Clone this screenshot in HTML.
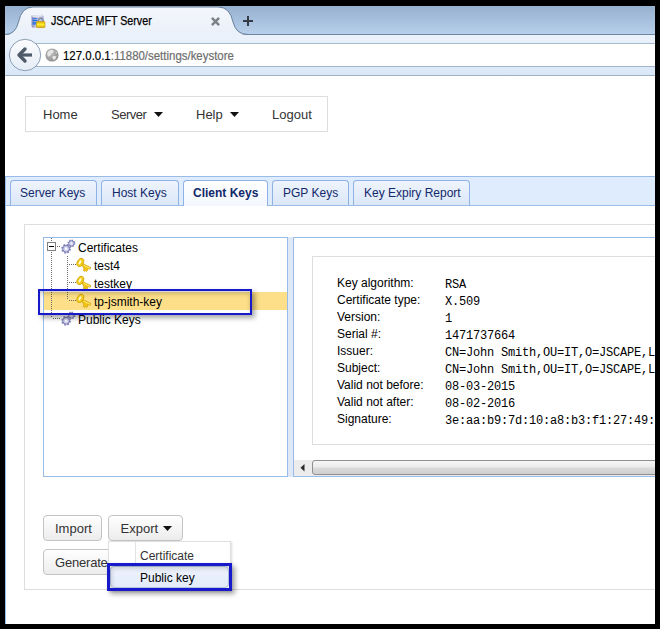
<!DOCTYPE html>
<html><head><meta charset="utf-8">
<style>
*{margin:0;padding:0;box-sizing:border-box}
html,body{width:660px;height:629px;overflow:hidden;background:#000}
body{position:relative;font-family:"Liberation Sans",sans-serif}
.a{position:absolute}
#vp{position:absolute;left:5px;top:6px;width:650px;height:618px;background:#fff;overflow:hidden}
/* chrome */
#strip{position:absolute;left:0;top:0;width:650px;height:29px;background:linear-gradient(#96b0cf,#b7cfea);border-bottom:1px solid #6f87a2}
#toolbar{position:absolute;left:0;top:29px;width:650px;height:41px;background:linear-gradient(#ebf2fb,#d9e7f7);border-bottom:1px solid #9fb1c4}
#url{position:absolute;left:20px;top:37px;width:640px;height:24px;background:#fff;border-top:1px solid #a9bacd;border-bottom:1px solid #a3b4c6}
.t{white-space:pre;position:absolute;line-height:1}
.nav{font-size:13px;color:#333}
.tab{position:absolute;top:180px;height:25px;border:1px solid #8db2e3;border-bottom:none;border-radius:4px 4px 0 0;background:linear-gradient(#eef4fd,#dbe7f7);font-size:12px;color:#12296a}
.lbl{font-size:12px;color:#000}
.val{font-family:"Liberation Mono",monospace;font-size:12px;color:#000;letter-spacing:-0.2px}
.btn{position:absolute;height:26px;border:1px solid #c4c4c4;border-radius:4px;background:linear-gradient(#fff,#ececec);font-size:13px;color:#333}
</style></head><body>
<div id="vp">
  <div id="strip"></div>
  <!-- active browser tab -->
  <svg class="a" style="left:0;top:0" width="260" height="31">
    <defs><linearGradient id="tg" x1="0" y1="0" x2="0" y2="1"><stop offset="0" stop-color="#f4f7fc"/><stop offset="1" stop-color="#e9f0f9"/></linearGradient></defs>
    <path d="M0,29 Q10.5,29 13.5,16 Q16.5,1.5 28,1 L213,1 Q225,1.5 228,16 Q231,29 243,29 L650,29 L650,31 L0,31 Z" fill="url(#tg)" stroke="none"/>
    <path d="M0,28.5 Q10.5,28.5 13.5,16 Q16.5,1 28,1 L213,1 Q225,1 228,16 Q231,28.5 243,28.5" fill="none" stroke="#6a829c" stroke-width="1"/>
  </svg>
  <div id="toolbar"></div>
  <div id="url"></div>
  <!-- tab icon -->
  <svg class="a" style="left:26px;top:8px" width="15" height="15" viewBox="0 0 15 15">
    <defs><linearGradient id="ig" x1="0" y1="0" x2="1" y2="0"><stop offset="0" stop-color="#8e8eb8"/><stop offset="0.5" stop-color="#d6d6ea"/><stop offset="1" stop-color="#9a9ac4"/></linearGradient>
    <linearGradient id="lg" x1="0" y1="0" x2="0" y2="1"><stop offset="0" stop-color="#e0b000"/><stop offset="0.5" stop-color="#fff030"/><stop offset="1" stop-color="#d8a800"/></linearGradient></defs>
    <path d="M0.5,1.5 L11.5,0.8 L12.5,2.5 L12.5,13 L1.5,13.8 L0.5,12 Z" fill="url(#ig)"/>
    <path d="M1,1.5 L11.5,1 L12,2.5 L1.5,3 Z" fill="#e8e8f4"/>
    <path d="M1.5,4.8 H6.5 M1.5,6.5 H6.5 M1.5,8.2 H6 M1.5,9.9 H5.5" stroke="#1b6fe0" stroke-width="1.1"/>
    <path d="M7.2,8.6 V6.2 Q9.7,2.4 12.2,6.2 V8.6" fill="none" stroke="#7d8ca4" stroke-width="1.4"/>
    <path d="M8.4,8.5 V6.8 Q9.7,4.6 11,6.8 V8.5" fill="none" stroke="#cfe0f0" stroke-width="0.6"/>
    <rect x="5.5" y="7.6" width="8.5" height="6" rx="0.8" fill="url(#lg)" stroke="#c09000" stroke-width="0.6"/>
  </svg>
  <div class="t" style="left:46px;top:9px;font-size:12px;color:#000;-webkit-text-stroke:0.25px #000;transform:scaleX(0.89);transform-origin:0 0">JSCAPE MFT Server</div>
  <svg class="a" style="left:205.5px;top:10.5px" width="9" height="9" viewBox="0 0 9 9"><path d="M0.9,0.9 L8.1,8.1 M8.1,0.9 L0.9,8.1" stroke="#7b8189" stroke-width="2.5"/></svg>
  <svg class="a" style="left:238px;top:10px" width="10" height="10" viewBox="0 0 10 10"><path d="M5,0 V10 M0,5 H10" stroke="#333b45" stroke-width="2"/></svg>
  <!-- back button -->
  <svg class="a" style="left:3px;top:32px" width="34" height="34" viewBox="0 0 34 34">
    <defs><linearGradient id="bg" x1="0" y1="0" x2="0" y2="1"><stop offset="0" stop-color="#fbfcfe"/><stop offset="1" stop-color="#e6edf6"/></linearGradient></defs>
    <circle cx="17" cy="17" r="15.7" fill="url(#bg)" stroke="#8d9fb5" stroke-width="1"/>
    <path d="M11.5,17 H24" fill="none" stroke="#4f5b68" stroke-width="3.2"/><path d="M17,11 L11,17 L17,23" fill="none" stroke="#4f5b68" stroke-width="3.4" stroke-linecap="round" stroke-linejoin="round"/>
  </svg>
  <!-- globe -->
  <svg class="a" style="left:40px;top:42px" width="14" height="14" viewBox="0 0 14 14">
    <defs><radialGradient id="gg" cx="0.4" cy="0.35" r="0.7"><stop offset="0" stop-color="#c4c4c4"/><stop offset="1" stop-color="#8c8c8c"/></radialGradient></defs>
    <circle cx="7" cy="7" r="6.6" fill="url(#gg)"/>
    <path d="M2.5,4.5 Q4,1.6 7.5,1.8 Q9.5,3 8,4.8 Q6.2,5.2 5.6,7 Q4.8,8.8 3,8.4 Q1.8,6.5 2.5,4.5 Z M7.5,8.2 Q10,7.4 11.6,8.6 Q11,11.2 8.6,12 Q7,10.4 7.5,8.2 Z M10.5,3 Q12,4 12.2,5.6 L11,5.2 Z" fill="#e6e6e6"/>
  </svg>
  <div class="t" style="left:58px;top:43px;font-size:13px;color:#000;-webkit-text-stroke:0.2px #000;transform:scaleX(0.88);transform-origin:0 0">127.0.0.1<span style="color:#6d6d6d;-webkit-text-stroke:0.2px #6d6d6d">:11880/settings/keystore</span></div>
</div>

<div id="pg" style="position:absolute;left:0;top:0;width:655px;height:624px;overflow:hidden">
<!-- page content (absolute page coordinates) -->
<div class="a" style="left:25px;top:96px;width:303px;height:36px;border:1px solid #ddd;background:#fff"></div>
<div class="t nav" style="left:43px;top:108px">Home</div>
<div class="t nav" style="left:111px;top:108px;letter-spacing:-0.5px">Server</div>
<svg class="a" style="left:154px;top:112px" width="9" height="5"><path d="M0,0 H9 L4.5,5 Z" fill="#111"/></svg>
<div class="t nav" style="left:196px;top:108px">Help</div>
<svg class="a" style="left:230px;top:112px" width="9" height="5"><path d="M0,0 H9 L4.5,5 Z" fill="#111"/></svg>
<div class="t nav" style="left:272px;top:108px">Logout</div>

<!-- tab bar -->
<div class="a" style="left:5px;top:176px;width:650px;height:30px;background:#deecfd;border-top:1px solid #99bbe8;border-bottom:1px solid #99bbe8"></div>
<div class="tab" style="left:10px;width:87px;top:180px"><span class="t" style="left:9px;top:6px">Server Keys</span></div>
<div class="tab" style="left:101px;width:78px;top:180px"><span class="t" style="left:10px;top:6px">Host Keys</span></div>
<div class="tab" style="left:183px;width:85px;top:180px;height:26px;background:linear-gradient(#fff,#f3f7fd);font-weight:bold"><span class="t" style="left:9px;top:6px">Client Keys</span></div>
<div class="tab" style="left:272px;width:77px;top:180px"><span class="t" style="left:10px;top:6px">PGP Keys</span></div>
<div class="tab" style="left:353px;width:117px;top:180px"><span class="t" style="left:10px;top:6px">Key Expiry Report</span></div>

<div class="a" style="left:5px;top:176px;width:1px;height:448px;background:#99bbe8"></div>
<!-- outer container -->
<div class="a" style="left:24px;top:224px;width:660px;height:366px;border:1px solid #ddd"></div>
<!-- tree panel -->
<div class="a" style="left:43px;top:237px;width:245px;height:240px;border:1px solid #99bbe8;background:#fff"></div>
<div class="a" style="left:288px;top:237px;width:5px;height:240px;background:#dfe8f6"></div>
<div class="a" style="left:44px;top:292px;width:243px;height:18px;background:#fcdf88"></div>

<!-- tree -->
<svg class="a" style="left:0;top:0" width="300" height="340">
  <defs>
    <g id="gear">
      <g transform="translate(13.4,6.4)">
        <circle r="3.2" fill="none" stroke="#8a8ac2" stroke-width="1.6" stroke-dasharray="1.4 1.11"/>
        <circle r="2.7" fill="#d4d4ee" stroke="#7272b0" stroke-width="0.9"/>
        <circle r="0.9" fill="#f4f4fc"/>
      </g>
      <g transform="translate(8.1,11.8)">
        <circle r="4" fill="none" stroke="#8484be" stroke-width="1.8" stroke-dasharray="1.7 1.44"/>
        <circle r="3.4" fill="#d0d0ec" stroke="#6e6eac" stroke-width="0.9"/>
        <circle r="1.2" fill="#ffffff"/>
      </g>
    </g>
    <g id="key">
      <path d="M7.6,7.4 L15.9,11.5 L15.1,13.3 L12.9,12.3 L12.6,14.6 L11.4,15.6 L10.6,14.3 L9.6,15.4 L8.4,14.6 L8.8,12.2 L6.9,9.3 Z" fill="#f3c414" stroke="#c89a00" stroke-width="0.6"/>
      <ellipse cx="5.3" cy="6.4" rx="3" ry="4.5" transform="rotate(28 5.3 6.4)" fill="#f6cf1c" stroke="#c89a00" stroke-width="0.7"/>
      <ellipse cx="5" cy="6.3" rx="1" ry="2.3" transform="rotate(28 5 6.3)" fill="#fffbe0"/>
      <path d="M8.6,9.2 L15,12.3" stroke="#fff27a" stroke-width="0.9"/>
    </g>
  </defs>
  <g fill="#777">
    <path d="M51.5,238v6M51.5,252v66M67.5,256v44M57,246.5h3M69,264.5h7M69,282.5h7M69,300.5h7M53,318.5h7" stroke="#6a6a6a" stroke-width="1" stroke-dasharray="1 1"/>
  </g>
  <rect x="47.5" y="242.5" width="8" height="8" fill="#fff" stroke="#808080"/>
  <path d="M49,246.5h5" stroke="#000" stroke-width="1"/>
  <use href="#gear" x="58" y="237"/>
  <use href="#key" x="75" y="256"/>
  <use href="#key" x="75" y="274"/>
  <use href="#key" x="75" y="292"/>
  <use href="#gear" x="58" y="309"/>
</svg>
<div class="t" style="left:78px;top:242px;font-size:12px;color:#000">Certificates</div>
<div class="t" style="left:94px;top:260px;font-size:12px;color:#000">test4</div>
<div class="t" style="left:94px;top:278px;font-size:12px;color:#000">testkey</div>
<div class="t" style="left:94px;top:296px;font-size:12px;color:#000">tp-jsmith-key</div>
<div class="t" style="left:78px;top:314px;font-size:12px;color:#000">Public Keys</div>
<!-- right panel -->
<div class="a" style="left:293px;top:237px;width:400px;height:240px;border:1px solid #99bbe8;background:#fff"></div>
<div class="a" style="left:312px;top:256px;width:400px;height:189px;border:1px solid #ddd"></div>

<div class="t lbl" style="left:337px;top:277px">Key algorithm:</div>
<div class="t lbl" style="left:337px;top:294px">Certificate type:</div>
<div class="t lbl" style="left:337px;top:311px">Version:</div>
<div class="t lbl" style="left:337px;top:328px">Serial #:</div>
<div class="t lbl" style="left:337px;top:345px">Issuer:</div>
<div class="t lbl" style="left:337px;top:362px">Subject:</div>
<div class="t lbl" style="left:337px;top:379px">Valid not before:</div>
<div class="t lbl" style="left:337px;top:396px">Valid not after:</div>
<div class="t lbl" style="left:337px;top:413px">Signature:</div>

<div class="t val" style="left:445px;top:279px">RSA</div>
<div class="t val" style="left:445px;top:296px">X.509</div>
<div class="t val" style="left:445px;top:313px">1</div>
<div class="t val" style="left:445px;top:330px">1471737664</div>
<div class="t val" style="left:445px;top:347px">CN=John Smith,OU=IT,O=JSCAPE,L</div>
<div class="t val" style="left:445px;top:364px">CN=John Smith,OU=IT,O=JSCAPE,L</div>
<div class="t val" style="left:445px;top:381px">08-03-2015</div>
<div class="t val" style="left:445px;top:398px">08-02-2016</div>
<div class="t val" style="left:445px;top:415px">3e:aa:b9:7d:10:a8:b3:f1:27:49:</div>

<!-- scrollbar -->
<div class="a" style="left:294px;top:460px;width:400px;height:16px;background:#ececec"></div>
<svg class="a" style="left:299.5px;top:464px" width="5" height="8"><path d="M4.5,0 V7.5 L0.5,3.75 Z" fill="#2a2a2a"/></svg>
<div class="a" style="left:312px;top:460px;width:400px;height:15px;border:1px solid #8f8f8f;border-radius:3px;background:linear-gradient(#f6f6f6,#ececec 45%,#dadada 55%,#cfcfcf)"></div>

<div class="a" style="left:38px;top:289px;width:214px;height:26px;border:2.5px solid #1919cc;box-shadow:3px 3px 5px rgba(0,0,0,.35), inset 0 3px 4px rgba(0,0,0,.18)"></div>
<!-- buttons -->
<div class="btn" style="left:43px;top:515px;width:59px"><span class="t" style="left:11px;top:6px">Import</span></div>
<div class="btn" style="left:108px;top:515px;width:75px"><span class="t" style="left:11.5px;top:6px">Export</span><svg class="a" style="left:54px;top:10px" width="9" height="5"><path d="M0,0 H9 L4.5,5 Z" fill="#111"/></svg></div>
<div class="btn" style="left:43px;top:549px;width:90px"><span class="t" style="left:11px;top:6px;letter-spacing:-0.2px">Generate</span></div>

<!-- dropdown menu -->
<div class="a" style="left:108px;top:541px;width:123px;height:50px;background:#fff;border:1px solid #e0e0e0;box-shadow:1px 1px 2px rgba(0,0,0,.15)"></div>
<div class="a" style="left:135px;top:542px;width:1px;height:48px;background:#e2e3e3"></div>
<div class="t" style="left:140px;top:550px;font-size:12px;color:#333">Certificate</div>
<div class="a" style="left:110px;top:566px;width:119px;height:22px;border:1px solid #b4c4de;border-radius:4px;background:linear-gradient(#eef3fd,#e3ebfb)"></div>
<div class="t" style="left:140px;top:572px;font-size:12px;color:#000">Public key</div>
<div class="a" style="left:107px;top:563px;width:125px;height:28px;border:3px solid #1919cc;box-shadow:3px 3px 5px rgba(0,0,0,.35), inset 2px 3px 4px rgba(0,0,0,.15)"></div>
</div>
</body></html>
